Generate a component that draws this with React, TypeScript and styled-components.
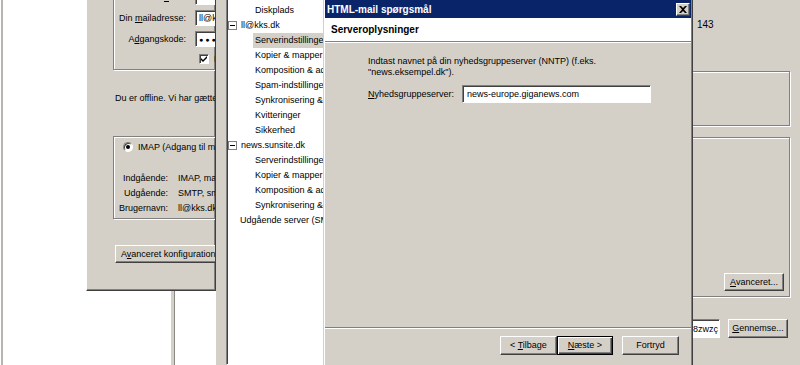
import React from 'react'
import styled, { createGlobalStyle } from 'styled-components'

const FACE = '#d4d0c8'

const GlobalStyle = createGlobalStyle`
  html, body {
    margin: 0;
    padding: 0;
    background: #fff;
  }
  body {
    font-family: 'Liberation Sans', Arial, sans-serif;
    font-size: 9px;
    color: #000;
  }
`

type TreeItem = { text: string; level: 0 | 1; expander?: boolean; selected?: boolean }

const TREE: TreeItem[] = [
  { text: 'Diskplads', level: 1 },
  { text: 'll@kks.dk', level: 0, expander: true },
  { text: 'Serverindstillinger', level: 1, selected: true },
  { text: 'Kopier & mapper', level: 1 },
  { text: 'Komposition & adressering', level: 1 },
  { text: 'Spam-indstillinger', level: 1 },
  { text: 'Synkronisering & lagerplads', level: 1 },
  { text: 'Kvitteringer', level: 1 },
  { text: 'Sikkerhed', level: 1 },
  { text: 'news.sunsite.dk', level: 0, expander: true },
  { text: 'Serverindstillinger', level: 1 },
  { text: 'Kopier & mapper', level: 1 },
  { text: 'Komposition & adressering', level: 1 },
  { text: 'Synkronisering & lagerplads', level: 1 },
  { text: 'Udgående server (SMTP)', level: 0 },
]

const INFO = [
  ['Indgående:', 'IMAP, mail.kks.dk, SSL'],
  ['Udgående:', 'SMTP, smtp.kks.dk, SSL'],
  ['Brugernavn:', 'll@kks.dk'],
]

export default function App() {
  return (
    <>
      <GlobalStyle />
      <Desktop>
        <FrameEdge />
        <StubBar />

        <Wizard>
          <WizardBody>
            <GroupBox $top={10} $height={100} $padTop={18}>
              <FormRow>
                <FieldLabel>Dit <u>n</u>avn:</FieldLabel>
                <TextInput>Lars</TextInput>
              </FormRow>
              <FormRow>
                <FieldLabel>Din <u>m</u>ailadresse:</FieldLabel>
                <TextInput>ll@kks.dk</TextInput>
              </FormRow>
              <FormRow>
                <FieldLabel>A<u>d</u>gangskode:</FieldLabel>
                <TextInput $secret>●●●●●●●●</TextInput>
              </FormRow>
              <CheckRow>
                <CheckBox>
                  <svg width="7" height="7" viewBox="0 0 7 7">
                    <path d="M0 3 L2 5 L6 1 L6 3 L2 7 L0 5 Z" fill="#000" />
                  </svg>
                </CheckBox>
                <span>Husk adgangskode</span>
              </CheckRow>
            </GroupBox>

            <Note>Du er offline. Vi har gættet følgende indstillinger:</Note>

            <GroupBox $top={32} $height={83} $padTop={4}>
              <RadioRow>
                <Radio />
                <span>IMAP (Adgang til mapper fra flere enheder)</span>
              </RadioRow>
              <InfoGrid>
                {INFO.map(([k, v]) => (
                  <React.Fragment key={k}>
                    <InfoKey>{k}</InfoKey>
                    <span>{v}</span>
                  </React.Fragment>
                ))}
              </InfoGrid>
            </GroupBox>

            <PushButton $h={18} $wide>
              A<u>v</u>anceret konfiguration
            </PushButton>
          </WizardBody>
        </Wizard>

        <SettingsWindow>
          <TreePanel>
            {TREE.map((item, i) => (
              <TreeRow key={i} $level={item.level} $expander={!!item.expander}>
                {item.expander && <Expander />}
                <TreeLabel $selected={!!item.selected}>{item.text}</TreeLabel>
              </TreeRow>
            ))}
          </TreePanel>
          <RightPane>
            <PortText>143</PortText>
            <Frame $top={40} $height={55} />
            <Frame $top={11} $height={160}>
              <PushButton $w={60} $h={18}>
                <u>A</u>vanceret...
              </PushButton>
            </Frame>
            <BottomRow>
              <Field>fR8zwzç</Field>
              <PushButton $w={60} $h={19}>
                <u>G</u>ennemse...
              </PushButton>
            </BottomRow>
          </RightPane>
        </SettingsWindow>

        <Dialog>
          <TitleBar>
            <TitleText>HTML-mail spørgsmål</TitleText>
            <CloseButton>
              <svg width="8" height="7" viewBox="0 0 8 7">
                <path d="M0 0 L2 0 L4 2 L6 0 L8 0 L5 3.5 L8 7 L6 7 L4 5 L2 7 L0 7 L3 3.5 Z" fill="#000" />
              </svg>
            </CloseButton>
          </TitleBar>
          <DialogHeader>Serveroplysninger</DialogHeader>
          <Etched />
          <DialogBody>
            <Para>
              Indtast navnet på din nyhedsgruppeserver (NNTP) (f.eks.
              <br />
              "news.eksempel.dk").
            </Para>
            <FieldRow>
              <RowLabel>
                <u>N</u>yhedsgruppeserver:
              </RowLabel>
              <ServerInput>news-europe.giganews.com</ServerInput>
            </FieldRow>
          </DialogBody>
          <Etched />
          <ButtonBar>
            <PushButton $w={57} $h={19}>
              &lt; <u>T</u>ilbage
            </PushButton>
            <PushButton $w={56} $h={19} $default>
              <u>N</u>æste &gt;
            </PushButton>
            <Spacer />
            <PushButton $w={57} $h={19}>
              Fortryd
            </PushButton>
          </ButtonBar>
        </Dialog>
      </Desktop>
    </>
  )
}

const Desktop = styled.div`
  position: relative;
  width: 800px;
  height: 365px;
  overflow: hidden;
  background: #fff;
`

const FrameEdge = styled.div`
  position: absolute;
  left: 1px;
  top: 0;
  bottom: 0;
  width: 2px;
  background: #b8b5ae;
`

const StubBar = styled.div`
  position: absolute;
  left: 170px;
  top: 291px;
  bottom: 0;
  width: 3px;
  background: ${FACE};
  border-left: 1px solid #fff;
  border-right: 1px solid #8c8a85;
`

const Wizard = styled.div`
  position: absolute;
  left: 86px;
  top: -40px;
  width: 130px;
  height: 331px;
  box-sizing: border-box;
  overflow: hidden;
  background: ${FACE};
  border-left: 1px solid #fff;
  border-right: 1px solid #404040;
  border-bottom: 1px solid #404040;
  box-shadow: inset -1px -1px #808080;
  z-index: 1;
`

const WizardBody = styled.div`
  width: 320px;
  padding-left: 26px;
  display: flex;
  flex-direction: column;
  align-items: flex-start;
`

const GroupBox = styled.div<{ $top: number; $height: number; $padTop: number }>`
  box-sizing: border-box;
  width: 300px;
  height: ${(p) => p.$height}px;
  margin-top: ${(p) => p.$top}px;
  padding-top: ${(p) => p.$padTop}px;
  border: 1px solid #808080;
  box-shadow: inset 1px 1px #fff, 1px 1px #fff;
  display: flex;
  flex-direction: column;
  gap: 5px;
`

const FormRow = styled.div`
  display: flex;
  align-items: center;
  height: 16px;
`

const FieldLabel = styled.span`
  width: 72px;
  margin-right: 9px;
  text-align: right;
  white-space: nowrap;
`

const TextInput = styled.div<{ $secret?: boolean }>`
  box-sizing: border-box;
  width: 140px;
  height: 16px;
  padding: 0 3px;
  display: flex;
  align-items: center;
  background: #fff;
  border: 1px solid;
  border-color: #808080 #fff #fff #808080;
  box-shadow: inset 1px 1px #404040;
  font-size: ${(p) => (p.$secret ? '7px' : '9px')};
  letter-spacing: ${(p) => (p.$secret ? '2px' : '0')};
`

const CheckRow = styled.div`
  display: flex;
  align-items: center;
  gap: 5px;
  height: 13px;
  padding-left: 85px;
`

const CheckBox = styled.span`
  box-sizing: border-box;
  width: 10px;
  height: 10px;
  display: flex;
  align-items: center;
  justify-content: center;
  background: #fff;
  border: 1px solid;
  border-color: #808080 #fff #fff #808080;
  box-shadow: inset 1px 1px #404040;
`

const Note = styled.div`
  margin-top: 22px;
  margin-left: 2px;
  line-height: 12px;
  white-space: nowrap;
`

const RadioRow = styled.div`
  display: flex;
  align-items: center;
  gap: 5px;
  height: 12px;
  padding-left: 9px;
  white-space: nowrap;
`

const Radio = styled.span`
  box-sizing: border-box;
  width: 10px;
  height: 10px;
  border-radius: 50%;
  background: #fff;
  border: 1px solid;
  border-color: #808080 #fff #fff #808080;
  box-shadow: inset 1px 1px #404040;
  display: flex;
  align-items: center;
  justify-content: center;
  &::after {
    content: '';
    width: 4px;
    height: 4px;
    border-radius: 50%;
    background: #000;
  }
`

const InfoGrid = styled.div`
  display: grid;
  grid-template-columns: 50px auto;
  column-gap: 10px;
  grid-auto-rows: 15px;
  align-items: center;
  margin-top: 12px;
  padding-left: 4px;
  white-space: nowrap;
`

const InfoKey = styled.span`
  text-align: right;
`

const PushButton = styled.div<{ $w?: number; $h: number; $default?: boolean; $wide?: boolean }>`
  box-sizing: border-box;
  flex-shrink: 0;
  width: ${(p) => (p.$w ? `${p.$w}px` : 'auto')};
  height: ${(p) => p.$h}px;
  line-height: ${(p) => p.$h - 2}px;
  padding: ${(p) => (p.$wide ? '0 20px 0 5px' : '0')};
  margin: ${(p) => (p.$wide ? '26px 0 0 2px' : '0')};
  text-align: ${(p) => (p.$wide ? 'left' : 'center')};
  white-space: nowrap;
  background: ${FACE};
  border: 1px solid;
  border-color: ${(p) => (p.$default ? '#000' : '#fff #404040 #404040 #fff')};
  box-shadow: ${(p) =>
    p.$default
      ? 'inset 1px 1px #fff, inset -1px -1px #404040, inset -2px -2px #808080'
      : 'inset -1px -1px #808080'};
`

const SettingsWindow = styled.div`
  position: absolute;
  left: 216px;
  top: 0;
  width: 584px;
  height: 365px;
  box-sizing: border-box;
  padding-left: 10px;
  display: flex;
  background: ${FACE};
  z-index: 2;
`

const TreePanel = styled.div`
  box-sizing: border-box;
  width: 200px;
  height: 375px;
  margin-top: -10px;
  padding-top: 12px;
  flex-shrink: 0;
  background: #fff;
  border: 1px solid;
  border-color: #808080 #fff #fff #808080;
  box-shadow: inset 1px 1px #404040;
`

const TreeRow = styled.div<{ $level: 0 | 1; $expander: boolean }>`
  display: flex;
  align-items: center;
  height: 15px;
  padding-left: ${(p) => (p.$level === 1 ? 26 : p.$expander ? 1 : 11)}px;
  gap: 2px;
  white-space: nowrap;
`

const Expander = styled.span`
  box-sizing: border-box;
  width: 9px;
  height: 9px;
  border: 1px solid #808080;
  display: flex;
  align-items: center;
  justify-content: center;
  &::after {
    content: '';
    width: 5px;
    height: 1px;
    background: #000;
  }
`

const TreeLabel = styled.span<{ $selected: boolean }>`
  padding: 0 2px;
  line-height: 15px;
  background: ${(p) => (p.$selected ? FACE : 'transparent')};
`

const RightPane = styled.div`
  flex: 1;
  margin-left: 10px;
  padding-right: 10px;
  display: flex;
  flex-direction: column;
`

const PortText = styled.div`
  margin-top: 19px;
  padding-left: 261px;
  line-height: 12px;
  font-size: 10px;
`

const Frame = styled.div<{ $top: number; $height: number }>`
  box-sizing: border-box;
  height: ${(p) => p.$height}px;
  margin-top: ${(p) => p.$top}px;
  padding: 0 5px 5px 0;
  border: 1px solid #808080;
  box-shadow: inset 1px 1px #fff, 1px 1px #fff;
  display: flex;
  align-items: flex-end;
  justify-content: flex-end;
`

const BottomRow = styled.div`
  display: flex;
  gap: 8px;
  margin-top: 22px;
  margin-right: 2px;
`

const Field = styled.div`
  flex: 1;
  box-sizing: border-box;
  height: 19px;
  display: flex;
  align-items: center;
  justify-content: flex-end;
  padding-right: 1px;
  background: #fff;
  border: 1px solid;
  border-color: #808080 #fff #fff #808080;
  box-shadow: inset 1px 1px #404040;
`

const Dialog = styled.div`
  position: absolute;
  left: 323px;
  top: -2px;
  width: 370px;
  height: 375px;
  box-sizing: border-box;
  padding: 1px;
  display: flex;
  flex-direction: column;
  background: ${FACE};
  border: 1px solid;
  border-color: ${FACE} #404040 #404040 ${FACE};
  box-shadow: inset 1px 1px #fff, inset -1px -1px #808080;
  z-index: 3;
`

const TitleBar = styled.div`
  height: 18px;
  flex-shrink: 0;
  display: flex;
  align-items: center;
  justify-content: space-between;
  padding: 0 1px 0 2px;
  background: #0a246a;
`

const TitleText = styled.span`
  color: #fff;
  font-weight: bold;
  font-size: 10px;
`

const CloseButton = styled.span`
  box-sizing: border-box;
  width: 14px;
  height: 13px;
  display: flex;
  align-items: center;
  justify-content: center;
  background: ${FACE};
  border: 1px solid;
  border-color: #fff #404040 #404040 #fff;
  box-shadow: inset -1px -1px #808080;
`

const DialogHeader = styled.div`
  height: 23px;
  flex-shrink: 0;
  display: flex;
  align-items: center;
  padding-left: 6px;
  background: #fff;
  font-weight: bold;
  font-size: 10px;
`

const Etched = styled.div`
  flex-shrink: 0;
  border-top: 1px solid #808080;
  border-bottom: 1px solid #fff;
`

const DialogBody = styled.div`
  flex: 1;
  padding: 13px 0 0 43px;
`

const Para = styled.div`
  line-height: 11px;
`

const FieldRow = styled.div`
  display: flex;
  align-items: center;
  margin-top: 7px;
  height: 18px;
`

const RowLabel = styled.span`
  width: 94px;
  flex-shrink: 0;
`

const ServerInput = styled.div`
  box-sizing: border-box;
  width: 189px;
  height: 18px;
  padding-left: 4px;
  display: flex;
  align-items: center;
  background: #fff;
  border: 1px solid;
  border-color: #808080 #fff #fff #808080;
  box-shadow: inset 1px 1px #404040;
`

const ButtonBar = styled.div`
  height: 42px;
  flex-shrink: 0;
  box-sizing: border-box;
  padding: 7px 12px 0 0;
  display: flex;
  justify-content: flex-end;
  align-items: flex-start;
`

const Spacer = styled.span`
  width: 9px;
`
